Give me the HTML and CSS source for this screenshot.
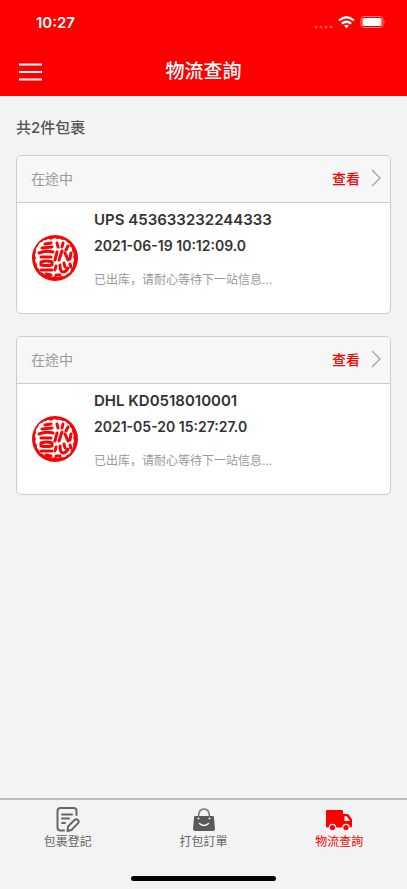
FILE: index.html
```html
<!DOCTYPE html>
<html lang="zh-Hant">
  <head>
    <meta charset="UTF-8" />
    <meta name="viewport" content="width=device-width, initial-scale=1.0" />
    <title>物流查詢</title>
    <link rel="stylesheet" href="styles.css">
  </head>
  <body>
    <!-- stamp logo, shared by the cards -->
    <svg class="sprite" aria-hidden="true">
      <symbol id="stamp" viewBox="0 0 46 46">
        <circle cx="23" cy="23" r="23" fill="#f50505" />
        <path fill="#fff" d="M14 5q3-2 5 0 3-3 6-1 3-1 5 1 3-1 5 2 3 1 3 4 3 2 2 5 3 3 1 6 2 3 0 6 1 4-2 6 0 4-4 5-2 3-6 2-3 2-6 0-4 2-6-1-4 1-6-2-4-1-4-4-3-2-2-5-3-3-1-6-2-3 0-6-1-4 2-6 1-4 4-4 1-2 4-2z" />
        <g class="stamp-lines">
          <path d="M13 9l6-1M10 13l10-1M7 18q7-3 14-1M9 22h10M9 27q6-2 11 0v3q-6 1-11 0zM9 35h11M14 39l5 1" />
          <path d="M25 8l1 4M31 8l-1 4M36 11l-2 4M25 17l-2 8M30 16l-3 9M33 18l3 7M39 18l-1 6" />
          <path d="M24 31l-1 4M28 30q0 7 3 7t5-4M32 28l1 4M38 29l1 3M24 40l4 0" />
        </g>
      </symbol>
    </svg>

    <header class="header">
      <div class="status-bar">
        <span class="time">10:27</span>
        <svg class="status-icons" viewBox="0 0 72 16" aria-hidden="true">
          <g fill="#ff4d4d">
            <circle cx="2" cy="12" r="1.6" />
            <circle cx="7" cy="12" r="1.6" />
            <circle cx="12" cy="12" r="1.6" />
            <circle cx="17" cy="12" r="1.6" />
          </g>
          <g fill="none" stroke="#fff" stroke-width="2.3">
            <path d="M25 5.500q7.500-6.500 15 0" />
            <path d="M27.800 8.700q4.700-4 9.400 0" />
          </g>
          <path fill="#fff" d="M30 10.600q2.500-1.900 5 0L32.500 13.300z" />
          <rect x="47" y="1.500" width="22" height="11" rx="3" fill="none" stroke="#ff8080" />
          <rect x="48.500" y="3" width="19" height="8" rx="1.500" fill="#fff" />
          <path d="M70.500 5v4q1.500-2 0-4z" fill="#ff8080" />
        </svg>
      </div>
      <div class="nav-bar">
        <button class="menu-button" type="button" aria-label="選單">
          <svg viewBox="0 0 24 20" aria-hidden="true">
            <path d="M1 2.500h23M1 10h23M1 17.500h23" stroke="#fff" stroke-width="2.2" />
          </svg>
        </button>
        <h1>物流查詢</h1>
      </div>
    </header>

    <main class="content">
      <h2 class="summary">共2件包裹</h2>

      <section class="card">
        <div class="card-header">
          <span class="state">在途中</span>
          <a class="view-link" href="#">查看
            <svg viewBox="0 0 10 18" aria-hidden="true">
              <path d="M1 1l8 8-8 8" />
            </svg>
          </a>
        </div>
        <div class="card-body">
          <svg class="stamp" aria-hidden="true"><use href="#stamp" /></svg>
          <div class="info">
            <p class="number">UPS 453633232244333</p>
            <p class="date">2021-06-19 10:12:09.0</p>
            <p class="message" lang="zh-Hans">已出库，请耐心等待下一站信息...</p>
          </div>
        </div>
      </section>

      <section class="card">
        <div class="card-header">
          <span class="state">在途中</span>
          <a class="view-link" href="#">查看
            <svg viewBox="0 0 10 18" aria-hidden="true">
              <path d="M1 1l8 8-8 8" />
            </svg>
          </a>
        </div>
        <div class="card-body">
          <svg class="stamp" aria-hidden="true"><use href="#stamp" /></svg>
          <div class="info">
            <p class="number">DHL KD0518010001</p>
            <p class="date">2021-05-20 15:27:27.0</p>
            <p class="message" lang="zh-Hans">已出库，请耐心等待下一站信息...</p>
          </div>
        </div>
      </section>
    </main>

    <footer class="footer">
      <nav class="tabs">
        <a class="tab" href="#">
          <svg viewBox="0 0 28 26" aria-hidden="true">
            <g fill="none" stroke="#666" stroke-width="2" stroke-linecap="round" stroke-linejoin="round">
              <path d="M10 23.500H6.500q-3 0-3-3V4q0-3 3-3h13q3 0 3 3v4" />
              <path d="M8 7.500h10M8 11.500h7M8 16h3" />
              <path d="M13.500 24l.5-4.500 6.500-6.500q1.700-1.700 3.400 0t0 3.400L17.500 23z" />
            </g>
          </svg>
          包裹登記
        </a>
        <a class="tab" href="#">
          <svg viewBox="0 0 28 26" aria-hidden="true">
            <path d="M8.500 10q0-8 5.500-8t5.500 8" fill="none" stroke="#777" stroke-width="1.600" />
            <path d="M5 9h18q.8 0 .9 1l1.100 12q.1 2-2 2H5q-2.100 0-2-2l1.100-12q.1-1 .9-1z" fill="#595959" />
            <circle cx="8.500" cy="11.500" r="1" fill="#f3f3f3" />
            <circle cx="19.500" cy="11.500" r="1" fill="#f3f3f3" />
            <path d="M9.500 16.500q4.500 4 9 0" fill="none" stroke="#f3f3f3" stroke-width="1.600" stroke-linecap="round" />
          </svg>
          打包訂單
        </a>
        <a class="tab active" href="#" aria-current="page">
          <svg viewBox="0 0 28 26" aria-hidden="true">
            <path fill="#f00" fill-rule="evenodd" d="M2 3h15q1 0 1 1v3h4q1 0 2 1l2.500 3.500q.5.500.5 1.500v6q0 1.500-1.500 1.500H2q-1 0-1-1V4q0-1 1-1zm17.500 6v5H25l-3-4.400q-.4-.6-1-.6z" />
            <g fill="#f00" stroke="#f3f3f3" stroke-width="1.200">
              <circle cx="7.500" cy="20.500" r="3.200" />
              <circle cx="21" cy="20.500" r="3.200" />
            </g>
          </svg>
          物流查詢
        </a>
      </nav>
      <div class="home-indicator"></div>
    </footer>
  </body>
</html>
```

FILE: styles.css
```css
* {
  box-sizing: border-box;
}

body {
  display: flex;
  flex-direction: column;
  min-height: 100vh;
  margin: 0;
  background-color: #f3f3f3;
  color: #333;
  font-family: Inter, "Noto Sans CJK TC", sans-serif;
}

h1,
h2,
p {
  margin: 0;
}

a {
  color: inherit;
  text-decoration: none;
}

[lang="zh-Hans"] {
  font-family: Inter, "Noto Sans CJK SC", sans-serif;
}

.sprite {
  position: absolute;
  width: 0;
  height: 0;
}

.stamp-lines {
  fill: none;
  stroke: #f50505;
  stroke-width: 3;
  stroke-linecap: round;
  stroke-linejoin: round;
}

/* Header */
.header {
  background-color: #f00;
  color: white;
}

.status-bar {
  display: flex;
  align-items: center;
  justify-content: space-between;
  height: 46px;
  padding: 0 21px 0 36px;
}

.time {
  font-size: 15px;
  font-weight: 600;
  line-height: 20px;
}

.status-icons {
  width: 72px;
  height: 16px;
}

.nav-bar {
  display: grid;
  grid-template-columns: 24px 1fr 24px;
  align-items: center;
  height: 50px;
  padding: 2px 18px 0;
}

.nav-bar h1 {
  font-size: 19px;
  font-weight: 500;
  line-height: 28px;
  text-align: center;
}

.menu-button {
  padding: 0;
  border: none;
  background: none;
  cursor: pointer;
}

.menu-button svg {
  display: block;
  width: 24px;
  height: 20px;
}

/* Parcel list */
.content {
  display: flex;
  flex: 1;
  flex-direction: column;
  padding: 20px 16px;
}

.summary {
  margin-bottom: 15px;
  color: #555;
  font-size: 15px;
  font-weight: 500;
  line-height: 24px;
}

.card {
  margin-bottom: 22px;
  border: 1px solid #ccc;
  border-radius: 5px;
  background-color: white;
  overflow: hidden;
}

.card-header {
  display: flex;
  align-items: center;
  justify-content: space-between;
  height: 47px;
  padding: 0 9px 2px 14px;
  border-bottom: 1px solid #ccc;
  background-color: #f7f7f7;
  font-size: 14px;
}

.state {
  color: #999;
}

.view-link {
  display: flex;
  align-items: center;
  gap: 11px;
  color: #f00;
  font-weight: 500;
}

.view-link svg {
  width: 10px;
  height: 18px;
  fill: none;
  stroke: #aaa;
  stroke-width: 1.5;
}

.card-body {
  display: flex;
  align-items: center;
  gap: 16px;
  height: 110px;
  padding: 0 15px;
}

.stamp {
  flex: none;
  width: 46px;
  height: 46px;
}

.info {
  flex: 1;
  height: 100%;
  padding-top: 4px;
}

.number,
.date {
  font-weight: 600;
  line-height: 26px;
}

.number {
  font-size: 15px;
}

.date {
  font-size: 14px;
}

.message {
  margin-top: 11px;
  color: #999;
  font-size: 12px;
  line-height: 20px;
}

/* Bottom tabs */
.footer {
  border-top: 2px solid #bbb;
}

.tabs {
  display: flex;
  padding-top: 7px;
}

.tab {
  display: flex;
  flex: 1;
  flex-direction: column;
  align-items: center;
  color: #666;
  font-size: 12px;
  line-height: 18px;
}

.tab svg {
  width: 28px;
  height: 26px;
}

.tab.active {
  color: #f00;
}

.home-indicator {
  width: 145px;
  height: 5px;
  margin: 25px auto 8px;
  border-radius: 3px;
  background-color: black;
}
```
